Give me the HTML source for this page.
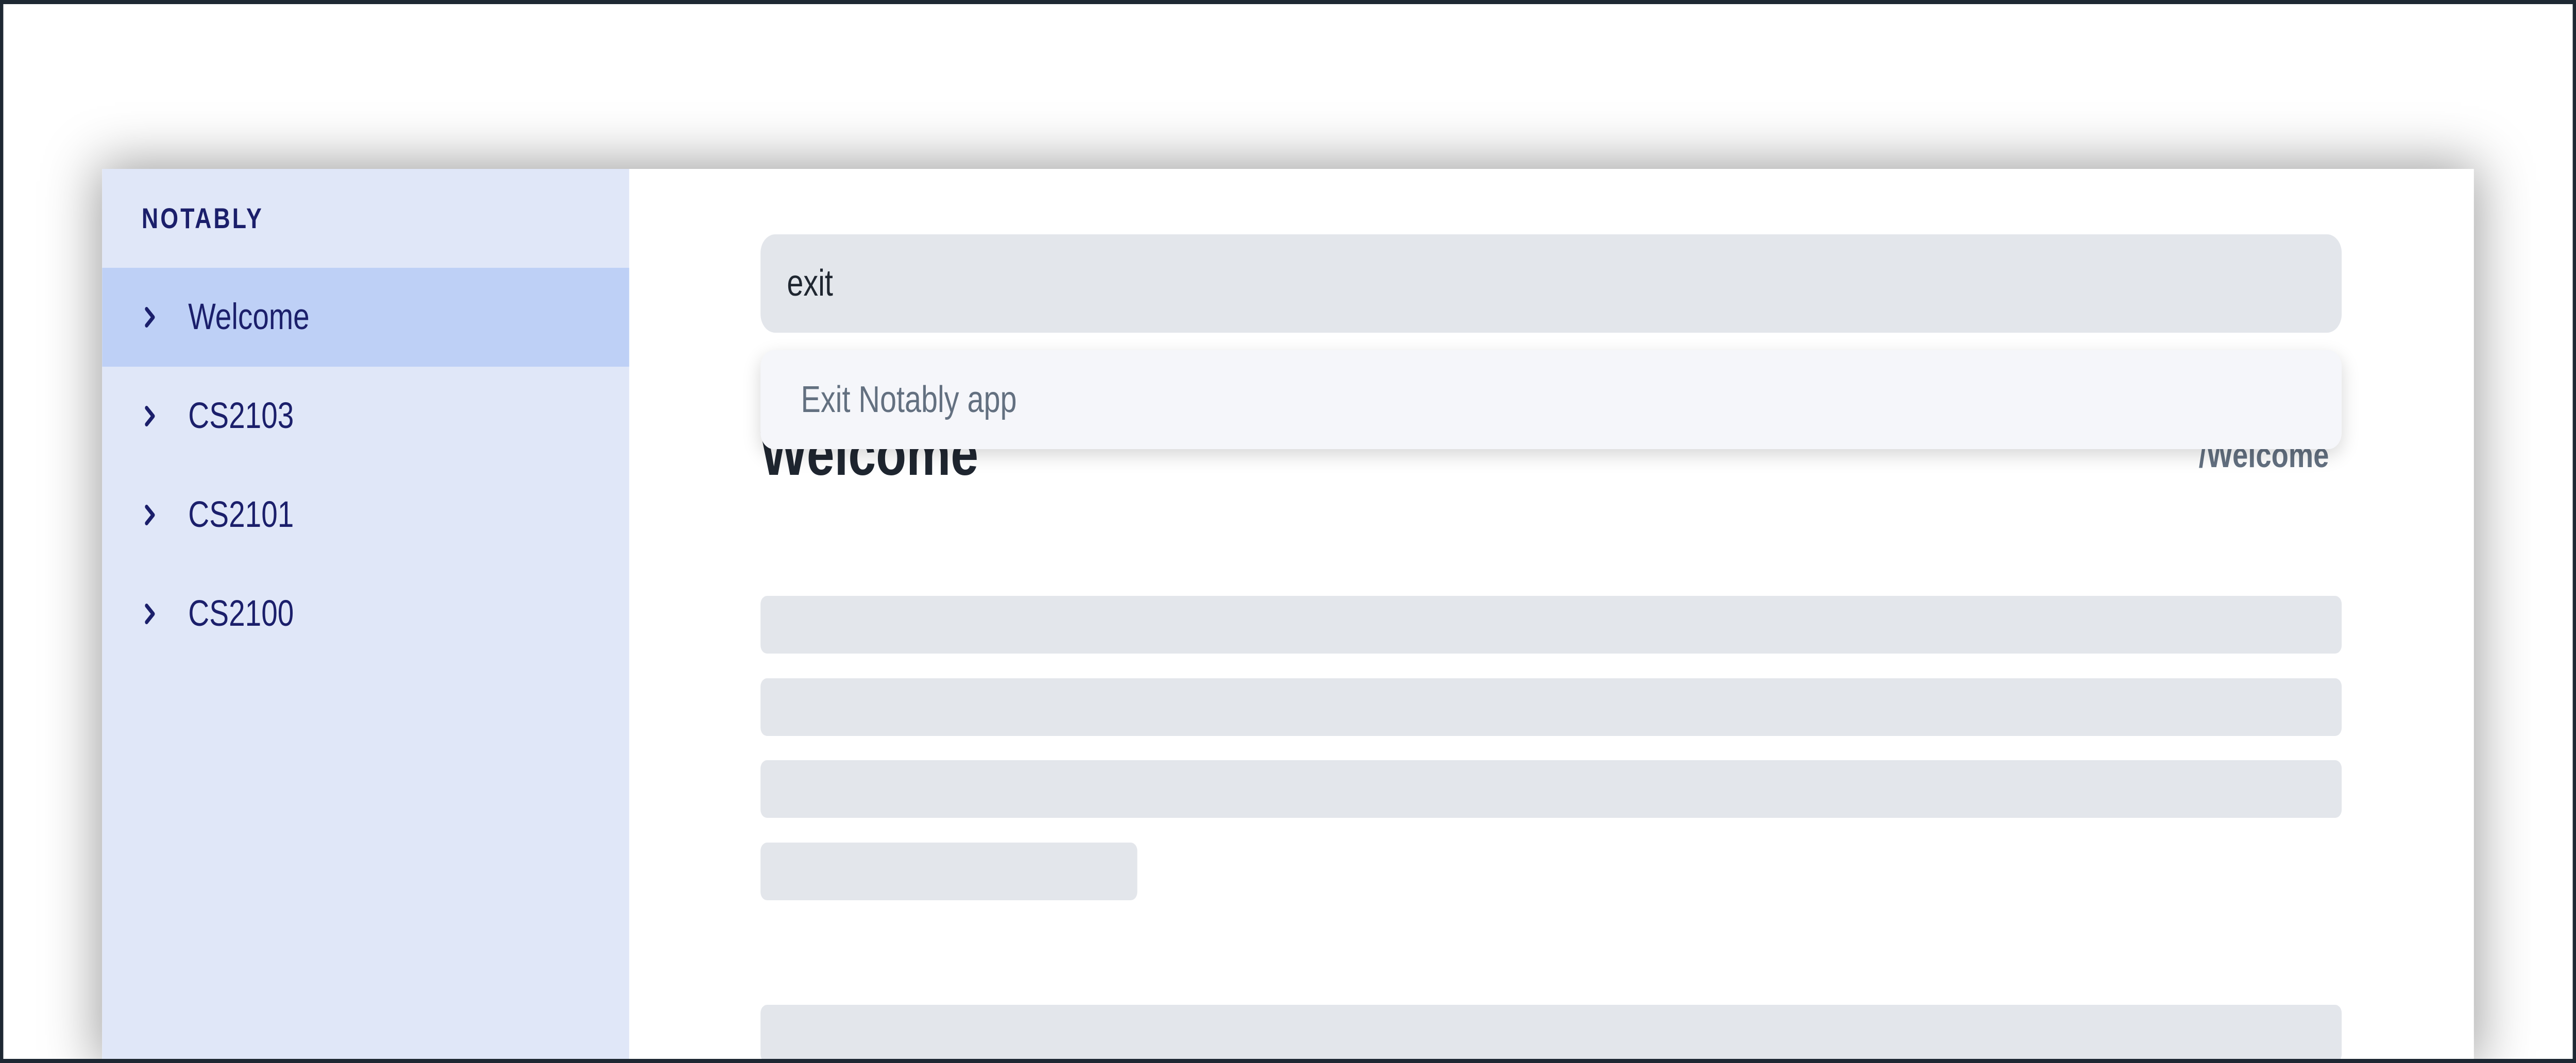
<!DOCTYPE html>
<html><head><meta charset="utf-8"><style>
*{margin:0;padding:0;box-sizing:border-box}
html,body{width:100vw;height:100vh;overflow:hidden;background:#fff}
body{font-family:"Liberation Sans",sans-serif;position:relative}
#root{position:absolute;left:0;top:0;width:6256px;height:2064px;transform-origin:0 0;transform:scale(calc(1),1)}
.frame{position:absolute;left:0;top:0;width:6256px;height:2064px;border:8px solid #1e2833;z-index:10;pointer-events:none}
.clip{position:absolute;left:0;top:0;width:6256px;height:2064px;overflow:hidden}
.win{position:absolute;left:248px;top:328px;width:5760px;height:1736px;background:#fff;box-shadow:0 0 110px 10px rgba(0,0,0,.38);overflow:hidden}
.side{position:absolute;left:0;top:0;width:1280px;height:100%;background:#e0e7f8}
.logo{position:absolute;left:96px;top:64px;font-weight:bold;font-size:56px;letter-spacing:5px;color:#1b1f6b;line-height:64px}
.row{position:absolute;left:0;width:1280px;height:192px;color:#1b1f6b;font-size:71px;line-height:192px}
.row.sel{background:#bed0f6}
.row span{position:absolute;left:209px;top:0}
.row svg{position:absolute;left:100px;top:76px;width:40px;height:40px}
.main{position:absolute;left:1280px;top:0;width:4480px;height:100%}
.search{position:absolute;left:319px;top:127px;width:3840px;height:191px;background:#e3e6eb;border-radius:36px;font-size:72px;color:#1f2630;line-height:191px;padding-left:64px}
.dd{position:absolute;left:319px;top:352px;width:3840px;height:192px;background:#f5f6fa;border-radius:32px;box-shadow:0 12px 40px rgba(0,0,0,.16);font-size:72px;color:#637080;line-height:192px;padding-left:98px;z-index:2}
.h1{position:absolute;left:319px;top:482px;font-size:121px;font-weight:bold;color:#1f2630;line-height:140px}
.path{position:absolute;right:352px;top:516px;font-size:68px;font-weight:bold;color:#637080;line-height:80px}
.bar{position:absolute;left:319px;width:3840px;height:112px;background:#e3e6eb;border-radius:16px}
</style></head><body>
<div id="root">
<div class="clip">
<div class="win">
 <div class="side">
  <div class="logo">NOTABLY</div>
  <div class="row sel" style="top:192px"><svg viewBox="0 0 40 40"><path d="M8 4 L24 20 L8 36" fill="none" stroke="#1b1f6b" stroke-width="8" stroke-linecap="round" stroke-linejoin="round"/></svg><span>Welcome</span></div>
  <div class="row" style="top:384px"><svg viewBox="0 0 40 40"><path d="M8 4 L24 20 L8 36" fill="none" stroke="#1b1f6b" stroke-width="8" stroke-linecap="round" stroke-linejoin="round"/></svg><span>CS2103</span></div>
  <div class="row" style="top:576px"><svg viewBox="0 0 40 40"><path d="M8 4 L24 20 L8 36" fill="none" stroke="#1b1f6b" stroke-width="8" stroke-linecap="round" stroke-linejoin="round"/></svg><span>CS2101</span></div>
  <div class="row" style="top:768px"><svg viewBox="0 0 40 40"><path d="M8 4 L24 20 L8 36" fill="none" stroke="#1b1f6b" stroke-width="8" stroke-linecap="round" stroke-linejoin="round"/></svg><span>CS2100</span></div>
 </div>
 <div class="main">
  <div class="search">exit</div>
  <div class="dd">Exit Notably app</div>
  <div class="h1">Welcome</div>
  <div class="path">/Welcome</div>
  <div class="bar" style="top:829px"></div>
  <div class="bar" style="top:989px"></div>
  <div class="bar" style="top:1148px"></div>
  <div class="bar" style="top:1308px;width:915px"></div>
  <div class="bar" style="top:1623px"></div>
 </div>
</div>
</div>
<div class="frame"></div>
</div>
<script>
(function(){var r=document.getElementById('root');function f(){var w=window.innerWidth||document.documentElement.clientWidth,h=window.innerHeight||document.documentElement.clientHeight;r.style.transform='scale('+(w/6256)+','+(h/2064)+')';}f();window.addEventListener('resize',f);})();
</script>
</body></html>
